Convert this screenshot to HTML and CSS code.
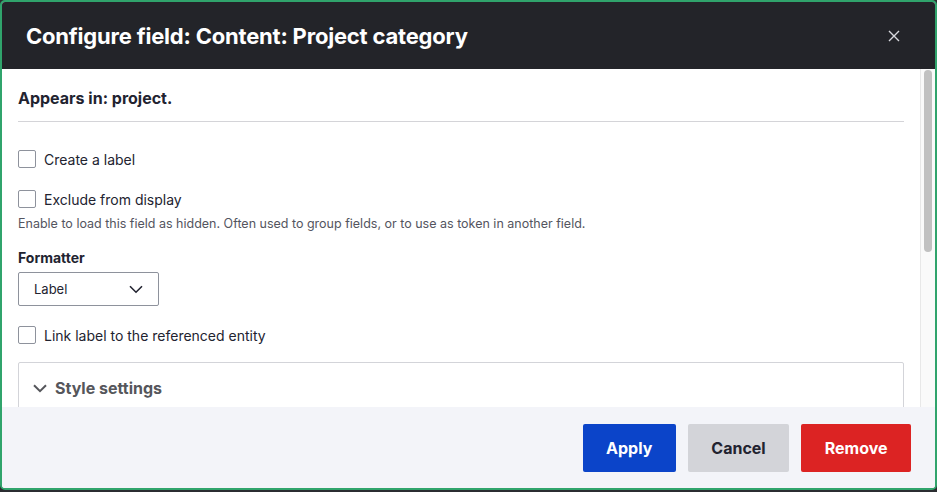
FILE: index.html
```html
<!DOCTYPE html>
<html lang="en">
<head>
<meta charset="utf-8">
<title>Configure field</title>
<link rel="stylesheet" href="styles.css">
</head>
<body>
<div class="dialog" role="dialog">
  <div class="dialog-header">
    <h2 class="dialog-title">Configure field: Content: Project category</h2>
    <button class="dialog-close" aria-label="Close">
      <svg width="12" height="12" viewBox="0 0 12 12"><path d="M1 1 L11 11 M11 1 L1 11" stroke="#d8d9de" stroke-width="1.4" fill="none"/></svg>
    </button>
  </div>
  <div class="dialog-body">
    <div class="dialog-content">
      <h3 class="appears">Appears in: project.</h3>
      <hr class="divider">
      <label class="check first"><span class="box"></span><span>Create a label</span></label>
      <label class="check second"><span class="box"></span><span>Exclude from display</span></label>
      <p class="desc">Enable to load this field as hidden. Often used to group fields, or to use as token in another field.</p>
      <div class="field-label">Formatter</div>
      <div class="select"><span>Label</span>
        <svg width="14" height="9" viewBox="0 0 14 9"><path d="M1 1.2 L7 7.2 L13 1.2" stroke="#222330" stroke-width="1.6" fill="none"/></svg>
      </div>
      <label class="check third"><span class="box"></span><span>Link label to the referenced entity</span></label>
      <div class="details">
        <div class="summary">
          <svg width="14" height="9" viewBox="0 0 14 9"><path d="M1 1.2 L7 7.2 L13 1.2" stroke="#55565b" stroke-width="2" fill="none"/></svg>
          <span>Style settings</span>
        </div>
      </div>
    </div>
    <div class="scrollbar"><div class="thumb"></div></div>
  </div>
  <div class="dialog-footer">
    <button class="btn primary">Apply</button>
    <button class="btn">Cancel</button>
    <button class="btn danger">Remove</button>
  </div>
</div>
</body>
</html>
```

FILE: styles.css
```css
* { box-sizing: border-box; }
html, body { margin: 0; padding: 0; }
body {
  background: #2b2d31;
  width: 937px;
  height: 492px;
  overflow: hidden;
  font-family: Inter, "Liberation Sans", sans-serif;
  color: #222330;
}
.dialog {
  width: 937px;
  height: 490px;
  border: 2px solid #30a46c;
  border-radius: 5px;
  overflow: hidden;
  display: flex;
  flex-direction: column;
  background: #fff;
}
.dialog-header {
  height: 67px;
  flex: none;
  background: #232429;
  display: flex;
  align-items: center;
  justify-content: space-between;
  padding: 1px 35px 0 24px;
}
.dialog-title {
  margin: 0;
  color: #fff;
  font-size: 22px;
  font-weight: 700;
  letter-spacing: -0.2px;
  line-height: 28px;
}
.dialog-close {
  background: none;
  border: 0;
  padding: 0;
  width: 12px;
  height: 12px;
  display: block;
}
.dialog-close svg { display: block; }
.dialog-body {
  flex: 1;
  min-height: 0;
  display: flex;
}
.dialog-content {
  flex: 1;
  overflow: hidden;
  padding: 17px 16px 16px 16px;
}
.scrollbar {
  flex: none;
  width: 15px;
  background: #fafafa;
  border-left: 1px solid #e8e8e8;
  padding: 1px 3px 0 3px;
}
.thumb {
  height: 182px;
  background: #c1c1c1;
  border-radius: 4px;
}
.appears {
  margin: 0;
  font-size: 16px;
  line-height: 24px;
  font-weight: 700;
}
.divider {
  margin: 11px 0 0;
  border: 0;
  border-top: 1px solid #d4d4d8;
  height: 0;
}
.check {
  display: flex;
  align-items: center;
  gap: 8px;
  height: 24px;
  font-size: 14px;
}
.check.first { margin-top: 25px; }
.check.second { margin-top: 16px; }
.check.third { margin-top: 17px; }
.box {
  width: 18px;
  height: 18px;
  border: 1px solid #8e929c;
  border-radius: 2px;
  background: #fff;
  flex: none;
}
.desc {
  margin: 5px 0 0;
  font-size: 12.5px;
  line-height: 16px;
  color: #545560;
}
.field-label {
  margin-top: 16px;
  font-size: 14px;
  line-height: 20px;
  font-weight: 700;
}
.select {
  margin-top: 4px;
  width: 141px;
  height: 34px;
  border: 1px solid #8e929c;
  border-radius: 2px;
  display: flex;
  align-items: center;
  justify-content: space-between;
  padding: 0 15px 0 15px;
  font-size: 13px;
}
.select svg { display: block; }
.details {
  margin-top: 15px;
  border: 1px solid #d3d4d9;
  border-radius: 2px;
}
.summary {
  height: 50px;
  display: flex;
  align-items: center;
  gap: 8px;
  padding-left: 14px;
  font-size: 16px;
  font-weight: 700;
  color: #55565b;
}
.summary svg { display: block; }
.dialog-footer {
  flex: none;
  height: 81px;
  background: #f3f4f9;
  display: flex;
  justify-content: flex-end;
  align-items: flex-start;
  gap: 12px;
  padding: 17px 24px 0 0;
}
.btn {
  height: 48px;
  border: 0;
  border-radius: 2px;
  padding: 0 23.5px;
  font-family: inherit;
  font-size: 16px;
  font-weight: 700;
  background: #d3d4d9;
  color: #222330;
}
.btn.primary { background: #0b44c9; color: #fff; }
.btn.danger { background: #dc2323; color: #fff; }
```
